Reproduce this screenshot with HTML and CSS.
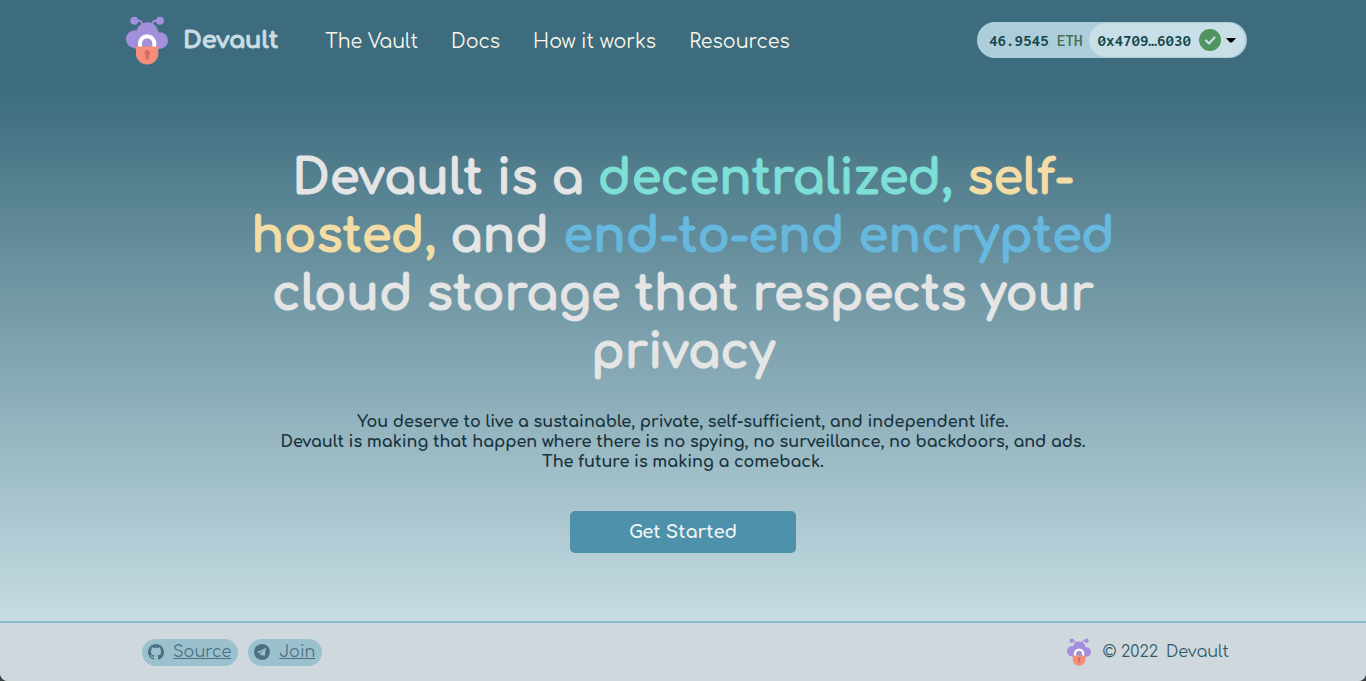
FILE: index.html
```html
<!DOCTYPE html>
<html lang="en">
<head>
  <meta charset="UTF-8" />
  <meta name="viewport" content="width=device-width, initial-scale=1.0" />
  <title>Devault</title>
  <link rel="stylesheet" href="styles.css">
</head>
<body>

  <!-- Logo, shared by the header and the footer -->
  <svg class="sprite" aria-hidden="true">
    <symbol id="logo" viewBox="48 50 126 146">
      <g fill="none" stroke="#a48fdc" stroke-width="6">
        <path d="M74 64H86Q95 64 97 76" />
        <path d="M149 64H137Q128 64 126 76" />
      </g>
      <g fill="#a48fdc">
        <circle cx="73" cy="64" r="12" />
        <circle cx="150" cy="64" r="12" />
        <circle cx="112" cy="101" r="33" />
        <circle cx="75" cy="119" r="27" />
        <circle cx="149" cy="123" r="25" />
        <rect x="74" y="110" width="76" height="37" />
      </g>
      <path d="M90 144V132a21.500 21.500 0 0 1 43 0V144" fill="none" stroke="#fff" stroke-width="12" />
      <path d="M78 141H145V162a33.500 33 0 0 1-67 0Z" fill="#f58d7b" />
      <path d="M107 166a8 8 0 1 1 10 0v10a5 5 0 0 1-10 0Z" fill="#d76d62" />
    </symbol>
  </svg>

  <header class="header">
    <a class="brand" href="#">
      <svg class="brand-logo" aria-hidden="true"><use href="#logo" /></svg>
      <span>Devault</span>
    </a>
    <nav class="nav">
      <a href="#">The Vault</a>
      <a href="#">Docs</a>
      <a href="#">How it works</a>
      <a href="#">Resources</a>
    </nav>
    <div class="wallet">
      <span class="balance">46.9545 <span class="unit">ETH</span></span>
      <button class="account" type="button">
        <span>0x4709…6030</span>
        <svg class="check" viewBox="0 0 22 22" aria-hidden="true">
          <circle cx="11" cy="11" r="11" fill="#51945f" />
          <path d="M7 11.500l3 3 5.500-6" fill="none" stroke="#c9dfe7" stroke-width="2.200" stroke-linecap="round" stroke-linejoin="round" />
        </svg>
        <svg class="caret" viewBox="0 0 10 5" aria-hidden="true"><path d="M0 0h10L6 4.500H4z" /></svg>
      </button>
    </div>
  </header>

  <main class="hero">
    <h1>Devault is a <span class="mint">decentralized,</span> <span class="sand">self-hosted,</span> and <span class="sky">end-to-end encrypted</span> cloud storage that respects your privacy</h1>
    <p>
      You deserve to live a sustainable, private, self-sufficient, and independent life.<br>
      Devault is making that happen where there is no spying, no surveillance, no backdoors, and ads.<br>
      The future is making a comeback.
    </p>
    <button class="start" type="button">Get Started</button>
  </main>

  <footer class="footer">
    <div class="links">
      <a href="#">
        <svg viewBox="0 0 16 16" aria-hidden="true"><path fill="currentColor" d="M8 0C3.580 0 0 3.580 0 8c0 3.540 2.290 6.530 5.470 7.590.4.070.55-.17.55-.38 0-.19-.01-.82-.01-1.490-2.010.37-2.530-.49-2.690-.94-.09-.23-.48-.94-.82-1.130-.28-.15-.68-.52-.01-.53.63-.01 1.080.58 1.230.82.72 1.210 1.870.87 2.330.66.07-.52.28-.87.51-1.070-1.780-.2-3.640-.89-3.640-3.950 0-.87.31-1.590.82-2.150-.08-.2-.36-1.020.08-2.120 0 0 .67-.21 2.200.82.64-.18 1.320-.27 2-.27s1.360.09 2 .27c1.530-1.040 2.200-.82 2.200-.82.44 1.100.16 1.920.08 2.120.51.56.82 1.270.82 2.150 0 3.070-1.870 3.750-3.650 3.950.29.25.54.73.54 1.480 0 1.070-.01 1.930-.01 2.200 0 .21.15.46.55.38A8 8 0 0 0 16 8c0-4.420-3.580-8-8-8z" /></svg>
        <span>Source</span>
      </a>
      <a href="#">
        <svg viewBox="0 0 16 16" aria-hidden="true">
          <circle cx="8" cy="8" r="8" fill="currentColor" />
          <path d="M3 8l9-4-1.500 8.500-2.700-2-1.400 1.500-.4-2.500 3.700-3.500-4.600 2.900z" fill="#9bc0ce" />
        </svg>
        <span>Join</span>
      </a>
    </div>
    <div class="copyright">
      <svg class="footer-logo" aria-hidden="true"><use href="#logo" /></svg>
      <span>© 2022</span>
      <span>Devault</span>
    </div>
  </footer>

</body>
</html>
```
FILE: styles.css
```css
* {
  box-sizing: border-box;
  margin: 0;
  padding: 0;
}

html {
  background: #3a3f42;
}

body {
  font-family: Comfortaa, Lato, sans-serif;
  min-height: 100vh;
  display: flex;
  flex-direction: column;
  border-radius: 0 0 8px 8px;
  overflow: hidden;
  background: linear-gradient(#3c6c7d 88px, #c6dde4 calc(100% - 60px));
}

a {
  color: inherit;
  text-decoration: none;
}

button {
  border: none;
  cursor: pointer;
}

.sprite {
  display: none;
}

.header {
  display: flex;
  align-items: center;
  height: 80px;
  padding: 0 119px 0 126px;
}

.brand {
  display: flex;
  align-items: center;
  gap: 15px;
  margin-right: 47px;
  color: #c6dde4;
  font-size: 24px;
  font-weight: bold;
  -webkit-text-stroke: 1px;
}

.brand-logo {
  width: 42px;
  height: 49px;
}

.nav {
  display: flex;
  gap: 33px;
  padding-top: 2px;
  color: #fbf6ec;
  font-size: 19px;
}

.wallet {
  display: flex;
  align-items: center;
  gap: 6px;
  height: 36px;
  margin-left: auto;
  padding: 1px 2px 1px 12px;
  border-radius: 18px;
  background: #adcdda;
  color: #14484b;
  font: bold 17px Inconsolata, "DejaVu Sans Mono", monospace;
}

.unit {
  color: #427050;
  font-weight: 600;
}

.account {
  display: flex;
  align-items: center;
  height: 34px;
  padding: 0 9px;
  border-radius: 17px;
  background: #c9dfe7;
  color: inherit;
  font: inherit;
}

.check {
  width: 22px;
  height: 22px;
  margin: 0 5px 0 8px;
}

.caret {
  width: 10px;
  height: 5px;
}

.hero {
  flex: 1;
  display: flex;
  flex-direction: column;
  align-items: center;
  padding: 70px 24px 0;
  text-align: center;
}

h1 {
  max-width: 896px;
  color: #e5e5e5;
  font-size: 48px;
  line-height: 58px;
  -webkit-text-stroke: 1px;
}

.mint {
  color: #7ddfd5;
}

.sand {
  color: #f4dda5;
}

.sky {
  color: #67b8df;
}

.hero p {
  margin-top: 30px;
  color: #17323d;
  font-size: 16px;
  font-weight: bold;
  line-height: 20px;
}

.start {
  width: 226px;
  height: 42px;
  margin-top: 39px;
  border-radius: 5px;
  background: #4e91aa;
  color: #f3f5f5;
  font: bold 18px Comfortaa, Lato, sans-serif;
}

.footer {
  display: flex;
  align-items: center;
  justify-content: space-between;
  height: 60px;
  padding: 0 137px 0 142px;
  border-top: 2px solid #8cb9cb;
  background: #cfd8dd;
  color: #2f5b69;
  font-size: 16px;
}

.links {
  display: flex;
  gap: 10px;
  color: #4b7180;
}

.links a {
  display: flex;
  align-items: center;
  gap: 9px;
  height: 27px;
  padding: 0 7px 0 6px;
  border-radius: 14px;
  background: #9bc0ce;
}

.links svg {
  width: 16px;
  height: 16px;
}

.links span {
  text-decoration: underline;
}

.copyright {
  display: flex;
  align-items: center;
  gap: 8px;
}

.footer-logo {
  width: 24px;
  height: 28px;
  margin-right: 4px;
}
```
